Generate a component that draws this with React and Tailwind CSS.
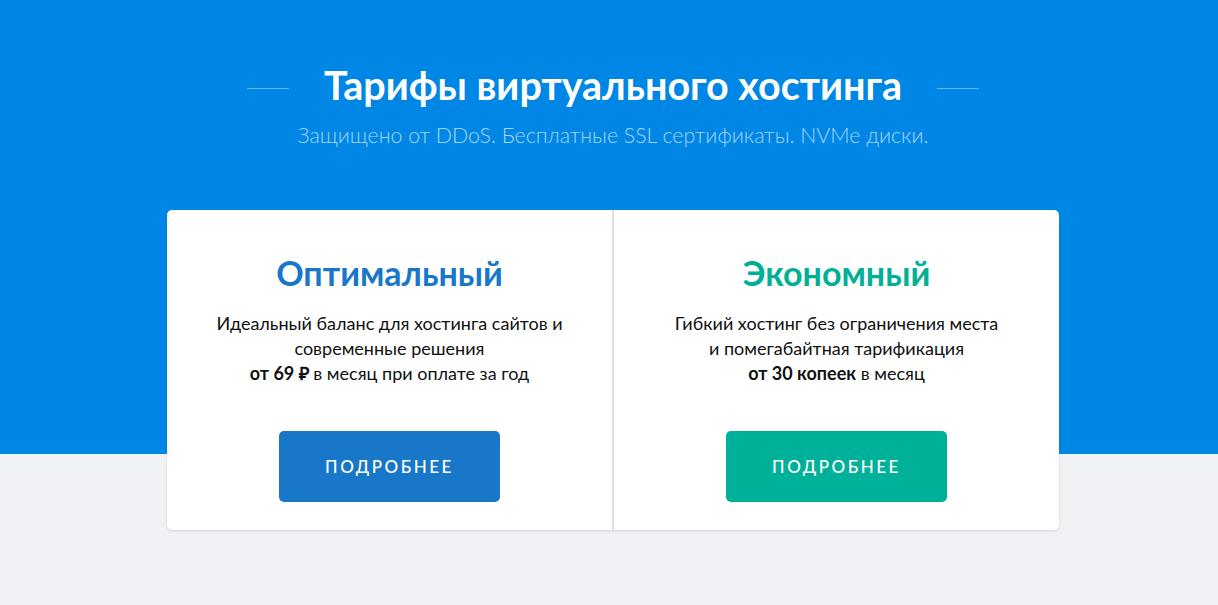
const plans = [
  {
    name: "Оптимальный",
    color: "text-[#1877c9]",
    button: "bg-[#1877c9]",
    lines: ["Идеальный баланс для хостинга сайтов и", "современные решения"],
    bold: "от 69 ₽",
    rest: " в месяц при оплате за год",
    divider: true,
  },
  {
    name: "Экономный",
    color: "text-[#00b096]",
    button: "bg-[#00b199]",
    lines: ["Гибкий хостинг без ограничения места", "и помегабайтная тарификация"],
    bold: "от 30 копеек",
    rest: " в месяц",
    divider: false,
  },
];

function PlanCard({ plan }) {
  return (
    <div className={`flex flex-1 flex-col items-center px-6 pt-[44px] pb-[28px] ${plan.divider ? "border-r-2 border-[#dedfe2]" : ""}`}>
      <h2 className={`text-[34px] leading-[38px] font-bold ${plan.color}`}>{plan.name}</h2>
      <p className="mt-[19px] text-center text-[18px] leading-[25px] text-[#111]">
        {plan.lines[0]}
        <br />
        {plan.lines[1]}
        <br />
        <b className="font-bold">{plan.bold}</b>
        {plan.rest}
      </p>
      <button className={`mt-[45px] h-[71px] w-[221px] rounded-[5px] text-[17px] font-medium tracking-[2.5px] text-white ${plan.button}`}>
        ПОДРОБНЕЕ
      </button>
    </div>
  );
}

export default function App() {
  return (
    <div className="min-h-[605px] bg-[#f1f2f5] font-['Lato','Liberation_Sans',sans-serif]">
      <section className="h-[454px] bg-[#0087e5] pl-2 pt-[62px]">
        <div className="flex items-center justify-center gap-[35px]">
          <span className="mt-[6px] h-px w-[42px] bg-white/40"></span>
          <h1 className="text-[39.5px] leading-[46px] font-bold text-white">Тарифы виртуального хостинга</h1>
          <span className="mt-[6px] h-px w-[42px] bg-white/40"></span>
        </div>
        <p className="mt-[14px] text-center text-[21.3px] leading-[26px] font-light text-[#a6d5fa]">
          Защищено от DDoS. Бесплатные SSL сертификаты. NVMe диски.
        </p>
      </section>
      <div className="-mt-[244px] pl-2">
        <div className="mx-auto flex w-[892px] rounded-[5px] bg-white shadow-[0_1px_3px_rgba(0,0,0,0.12)]">
          {plans.map((plan) => (
            <PlanCard key={plan.name} plan={plan} />
          ))}
        </div>
      </div>
    </div>
  );
}
